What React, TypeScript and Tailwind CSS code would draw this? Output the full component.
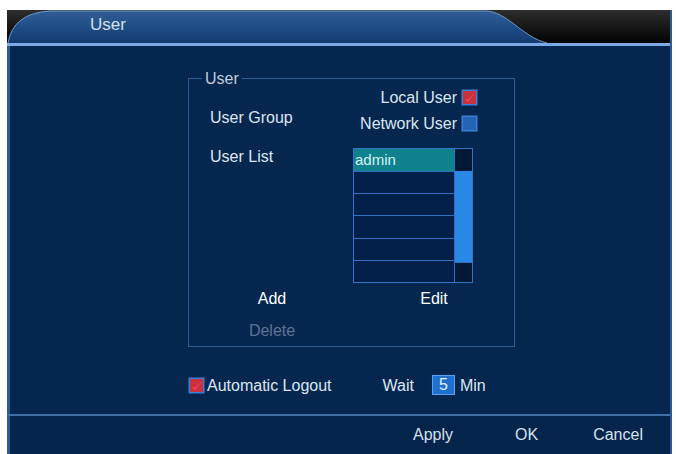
import React from 'react';

const font = { fontFamily: '"Liberation Sans", Arial, sans-serif' };

function CheckBox({ checked }: { checked: boolean }) {
    return (
        <svg width="17" height="17" viewBox="0 0 17 17" className="shrink-0">
            <rect x="0.5" y="0.5" width="16" height="16" fill="#3a7fd6" />
            <rect x="2" y="2" width="13" height="13" fill={checked ? '#c8313d' : '#2463b3'} />
            {checked && <path d="M4 10 L7 13 L14 4 L7 10.5 Z" fill="#f04650" />}
        </svg>
    );
}

export default function App() {
    const rows = ['admin', '', '', '', '', ''];

    return (
        <div className="w-[676px] h-[454px] bg-white pt-[10px] pl-[7px] pr-[4px] overflow-hidden" style={font}>
            <div className="h-[444px] flex flex-col border-l-[3px] border-r-[2px] border-[#2c5c98] bg-[#05264f]">
                {/* title bar */}
                <div className="relative h-[33px] -ml-[3px] bg-gradient-to-b from-[#2e2e2e] to-[#050505]">
                    <svg className="absolute inset-0" width="669" height="33" viewBox="0 0 669 33">
                        <defs>
                            <linearGradient id="tab" x1="0" y1="0" x2="0" y2="1">
                                <stop offset="0" stopColor="#2f5d94" />
                                <stop offset="0.5" stopColor="#1f4d86" />
                                <stop offset="1" stopColor="#133b70" />
                            </linearGradient>
                        </defs>
                        <path d="M1 33 Q 6 3 43 1 L 478 1 C 500 1 515 27 540 33 Z" fill="url(#tab)" />
                        <path d="M1 33 Q 6 3 43 1 L 478 1 C 500 1 515 27 540 33" fill="none" stroke="#6f98c8" strokeWidth="1" />
                    </svg>
                    <span className="relative block pl-[83px] pt-[5px] text-[17px] leading-[20px] text-[#d6e0ec]">User</span>
                </div>
                <div className="h-[3px] -ml-[3px] bg-[#7aa9e6]" />

                {/* body */}
                <div className="flex-1 flex flex-col pl-[178px]">
                    <div className="relative mt-[32px] w-[327px] h-[269px] border border-[#2e5d96] text-[16px] leading-[17px] text-[#dce6f2]">
                        <span className="absolute -top-[9px] left-[13px] px-[3px] bg-[#05264f] text-[#c0ccdc]">User</span>

                        <div className="flex justify-between pt-[10px] pr-[36px]">
                            <span className="ml-[21px] mt-[20px]">User Group</span>
                            <div className="flex flex-col items-end gap-[9px]">
                                <div className="flex items-center gap-[4px]">
                                    <span>Local User</span>
                                    <CheckBox checked />
                                </div>
                                <div className="flex items-center gap-[4px]">
                                    <span>Network User</span>
                                    <CheckBox checked={false} />
                                </div>
                            </div>
                        </div>

                        <div className="flex justify-between items-start mt-[16px] pr-[41px]">
                            <span className="ml-[21px]">User List</span>
                            <div className="flex w-[120px] h-[135px] border border-[#3275c6] bg-[#03204a]">
                                <div className="flex-1 flex flex-col">
                                    {rows.map((r, i) => (
                                        <div
                                            key={i}
                                            className={
                                                i === 0
                                                    ? 'h-[22px] bg-[#10828e] pl-[1px] text-[#d8f2f2] text-[15px] leading-[22px]'
                                                    : 'flex-1 border-t border-[#2f6ec0]'
                                            }
                                        >
                                            {r}
                                        </div>
                                    ))}
                                </div>
                                <div className="w-[18px] flex flex-col border-l border-[#2f6ec0]">
                                    <div className="h-[22px] bg-[#021834]" />
                                    <div className="flex-1 bg-[#2a88e6]" />
                                    <div className="h-[20px] bg-[#021834] border-t border-[#2f6ec0]" />
                                </div>
                            </div>
                        </div>

                        <div className="flex mt-[7px] text-white">
                            <span className="ml-[43px] w-[80px] text-center">Add</span>
                            <span className="ml-[82px] w-[80px] text-center">Edit</span>
                        </div>
                        <div className="flex mt-[15px]">
                            <span className="ml-[43px] w-[80px] text-center text-[#5d7594]">Delete</span>
                        </div>
                    </div>

                    <div className="flex items-center mt-[28px] text-[16px] leading-[17px] text-[#dce6f2]">
                        <CheckBox checked />
                        <span className="ml-[2px]">Automatic Logout</span>
                        <span className="ml-[51px]">Wait</span>
                        <span className="ml-[18px] w-[23px] h-[20px] bg-[#1f6fcf] border border-[#5aa0ee] text-center leading-[18px] text-[#e8f0fa]">5</span>
                        <span className="ml-[5px]">Min</span>
                    </div>
                </div>

                {/* footer */}
                <div className="h-[2px] -ml-[3px] bg-[#3d6ea8]" />
                <div className="h-[38px] flex items-center text-[16px] text-[#d6e0ec] bg-[#04244b]">
                    <span className="ml-[403px]">Apply</span>
                    <span className="ml-[62px]">OK</span>
                    <span className="ml-[55px]">Cancel</span>
                </div>
            </div>
        </div>
    );
}
